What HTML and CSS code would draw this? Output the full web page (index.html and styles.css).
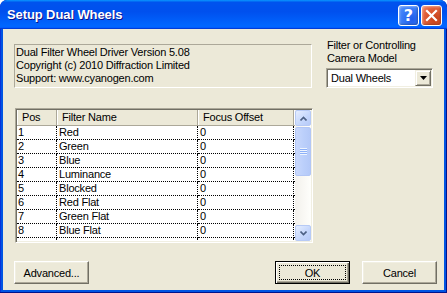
FILE: index.html
```html
<!DOCTYPE html>
<html>
<head>
<meta charset="utf-8">
<link rel="stylesheet" href="styles.css">
</head>
<body>
<div class="window">
  <div class="titlebar">
    <span class="title">Setup Dual Wheels</span>
    <div class="tbtns">
      <span class="tb help">?</span>
      <span class="tb close"><svg width="13" height="13" viewBox="0 0 13 13"><path d="M2 2 L11 11 M11 2 L2 11" stroke="#fff" stroke-width="2.2" stroke-linecap="square"/></svg></span>
    </div>
  </div>
  <div class="dlg">
    <div class="top">
      <div class="info">
        <div>Dual Filter Wheel Driver Version 5.08</div>
        <div>Copyright (c) 2010 Diffraction Limited</div>
        <div>Support: www.cyanogen.com</div>
      </div>
      <div class="side">
        <div class="lbl">Filter or Controlling<br>Camera Model</div>
        <div class="combo">
          <span class="cval">Dual Wheels</span>
          <span class="dd"><svg width="7" height="4" viewBox="0 0 7 4"><path d="M0 0 H7 L3.5 4 Z" fill="#000"/></svg></span>
        </div>
      </div>
    </div>
    <div class="list">
      <div class="grid">
        <div class="hd">Pos</div><div class="hd">Filter Name</div><div class="hd">Focus Offset</div><div class="hd fill"></div>
        <div class="c">1</div><div class="c">Red</div><div class="c">0</div><div class="f"></div>
        <div class="c">2</div><div class="c">Green</div><div class="c">0</div><div class="f"></div>
        <div class="c">3</div><div class="c">Blue</div><div class="c">0</div><div class="f"></div>
        <div class="c">4</div><div class="c">Luminance</div><div class="c">0</div><div class="f"></div>
        <div class="c">5</div><div class="c">Blocked</div><div class="c">0</div><div class="f"></div>
        <div class="c">6</div><div class="c">Red Flat</div><div class="c">0</div><div class="f"></div>
        <div class="c">7</div><div class="c">Green Flat</div><div class="c">0</div><div class="f"></div>
        <div class="c">8</div><div class="c">Blue Flat</div><div class="c">0</div><div class="f"></div>
        <div class="c"></div><div class="c"></div><div class="c"></div><div class="f"></div>
      </div>
      <div class="vscroll">
        <div class="sbtn"><svg width="7" height="5" viewBox="0 0 7 5"><path d="M0.5 4.5 L3.5 1.5 L6.5 4.5" stroke="#4D6185" stroke-width="1.6" fill="none"/></svg></div>
        <div class="thumb"><span class="grip"></span></div>
        <div class="track"></div>
        <div class="sbtn"><svg width="7" height="5" viewBox="0 0 7 5"><path d="M0.5 0.5 L3.5 3.5 L6.5 0.5" stroke="#4D6185" stroke-width="1.6" fill="none"/></svg></div>
      </div>
    </div>
    <div class="buttons">
      <button class="btn">Advanced...</button>
      <span class="spacer"></span>
      <button class="btn def"><span class="focus">OK</span></button>
      <button class="btn">Cancel</button>
    </div>
  </div>
</div>
</body>
</html>
```
FILE: styles.css
```css
html, body {
  margin: 0;
  padding: 0;
  background: #fff;
}
.window {
  width: 447px;
  height: 293px;
  box-sizing: border-box;
  display: flex;
  flex-direction: column;
  background: #0054E3;
  border-radius: 7px 7px 0 0;
  overflow: hidden;
  padding: 0 3px 3px 3px;
  box-shadow: inset -1px -1px #00138c, inset 1px 1px #0831d9;
  font-family: "Liberation Sans", Arial, sans-serif;
  font-size: 11px;
  letter-spacing: -0.2px;
  color: #000;
}
.titlebar {
  height: 29px;
  margin: 0 -3px;
  padding: 0 5px 0 7px;
  display: flex;
  align-items: center;
  background: linear-gradient(180deg, #0997ff, #0053ee 8%, #0050ee 40%, #06f 88%, #06f 93%, #005bff 95%, #003dd7 96%, #003dd7);
  border-radius: 7px 7px 0 0;
}
.title {
  flex: 1;
  color: #fff;
  font-weight: bold;
  font-size: 13px;
  letter-spacing: -0.1px;
  text-shadow: 1px 1px #0f1089;
  padding-bottom: 1px;
}
.tbtns {
  display: flex;
  gap: 2px;
  margin-top: 1px;
}
.tb {
  width: 19px;
  height: 19px;
  border: 1px solid #fff;
  border-radius: 3px;
  display: flex;
  align-items: center;
  justify-content: center;
  color: #fff;
  box-shadow: inset -1px -1px 2px rgba(0,0,0,0.25), inset 1px 1px 2px rgba(255,255,255,0.35);
}
.help {
  background: radial-gradient(circle at 70% 70%, #1F5CEB, #3C7EF8 60%, #5B96FA);
  font-family: "DejaVu Sans", sans-serif;
  font-weight: bold;
  font-size: 16px;
  letter-spacing: 0;
}
.close {
  background: radial-gradient(circle at 70% 70%, #C43F17, #E2603A 60%, #F08B6B);
}
.dlg {
  flex: 1;
  background: #ECE9D8;
  display: flex;
  flex-direction: column;
  padding: 9px 0 0 0;
}
.top {
  display: flex;
  align-items: flex-start;
}
.info {
  margin: 6px 0 0 11px;
  width: 298px;
  height: 44px;
  box-sizing: border-box;
  border: 1px solid;
  border-color: #ACA899 #fff #fff #ACA899;
  padding: 1px 0 0 1px;
  line-height: 13px;
}
.side {
  margin-left: 14px;
  width: 107px;
}
.lbl {
  line-height: 13px;
  padding: 1px 0 0 1px;
}
.combo {
  margin-top: 3px;
  height: 20px;
  box-sizing: border-box;
  background: #fff;
  border: 1px solid;
  border-color: #ACA899 #fff #fff #ACA899;
  box-shadow: inset 1px 1px #716F64, inset -1px -1px #F1EFE2;
  display: flex;
  align-items: stretch;
  padding: 1px;
}
.cval {
  flex: 1;
  padding-left: 3px;
  line-height: 16px;
}
.dd {
  width: 16px;
  box-sizing: border-box;
  background: #ECE9D8;
  border: 1px solid;
  border-color: #F1EFE2 #716F64 #716F64 #F1EFE2;
  box-shadow: inset 1px 1px #fff, inset -1px -1px #ACA899;
  display: flex;
  align-items: center;
  justify-content: center;
}
.list {
  margin: 20px 0 0 12px;
  width: 298px;
  height: 135px;
  box-sizing: border-box;
  border: 1px solid;
  border-color: #ACA899 #fff #fff #ACA899;
  box-shadow: inset 1px 1px #716F64, inset -1px -1px #F1EFE2;
  padding: 1px;
  display: flex;
  background: #fff;
}
.grid {
  flex: 1;
  overflow: hidden;
  display: grid;
  grid-template-columns: 40px 141px 96px 1fr;
  grid-auto-rows: 14px;
  grid-template-rows: 16px;
  align-content: start;
}
.hd {
  background: #ECE9D8;
  box-sizing: border-box;
  border-right: 1px solid #ACA899;
  border-bottom: 1px solid #ACA899;
  box-shadow: inset 1px 0 #fff;
  padding-left: 5px;
  line-height: 15px;
  white-space: nowrap;
}
.hd.fill {
  border-right: 0;
}
.c {
  box-sizing: border-box;
  border-right: 1px dotted #000;
  border-bottom: 1px dotted #000;
  padding-left: 1px;
  line-height: 13px;
  white-space: nowrap;
}
.c:nth-child(4n+2) {
  padding-left: 2px;
}
.c:nth-child(4n+3) {
  padding-left: 2px;
}
.f {
  box-sizing: border-box;
  border-bottom: 1px dotted #000;
}
.vscroll {
  width: 16px;
  display: flex;
  flex-direction: column;
  background: linear-gradient(90deg, #F3F1EC, #FEFEFB);
}
.sbtn {
  height: 16px;
  box-sizing: border-box;
  border: 1px solid #B7CAF5;
  border-radius: 2px;
  background: linear-gradient(135deg, #E6EEFF, #C4D6FC 60%, #B6CAF8);
  display: flex;
  align-items: center;
  justify-content: center;
  flex: none;
}
.thumb {
  margin-top: 1px;
  height: 49px;
  box-sizing: border-box;
  border: 1px solid #B2C6F5;
  border-radius: 2px;
  background: linear-gradient(90deg, #C9D8FC, #BCD0FB 50%, #B4C9F8);
  display: flex;
  align-items: center;
  justify-content: center;
  flex: none;
}
.grip {
  width: 7px;
  height: 7px;
  background: repeating-linear-gradient(180deg, #EEF4FE 0 1px, #8CB0F8 1px 2px);
}
.track {
  flex: 1;
}
.buttons {
  margin: 18px 7px 0 11px;
  display: flex;
  gap: 12px;
}
.spacer {
  flex: 1;
}
.btn {
  width: 75px;
  height: 23px;
  box-sizing: border-box;
  background: #ECE9D8;
  border: 1px solid;
  border-color: #fff #716F64 #716F64 #fff;
  box-shadow: inset -1px -1px #ACA899, inset 1px 1px #F1EFE2;
  font-family: "Liberation Sans", Arial, sans-serif;
  font-size: 11px;
  letter-spacing: -0.2px;
  color: #000;
  padding: 0;
  display: flex;
  align-items: center;
  justify-content: center;
}
.btn.def {
  border: 1px solid #000;
  box-shadow: inset 1px 1px #fff, inset -1px -1px #716F64, inset -2px -2px #ACA899;
  padding: 3px;
}
.focus {
  flex: 1;
  align-self: stretch;
  border: 1px dotted #000;
  display: flex;
  align-items: center;
  justify-content: center;
}
```
